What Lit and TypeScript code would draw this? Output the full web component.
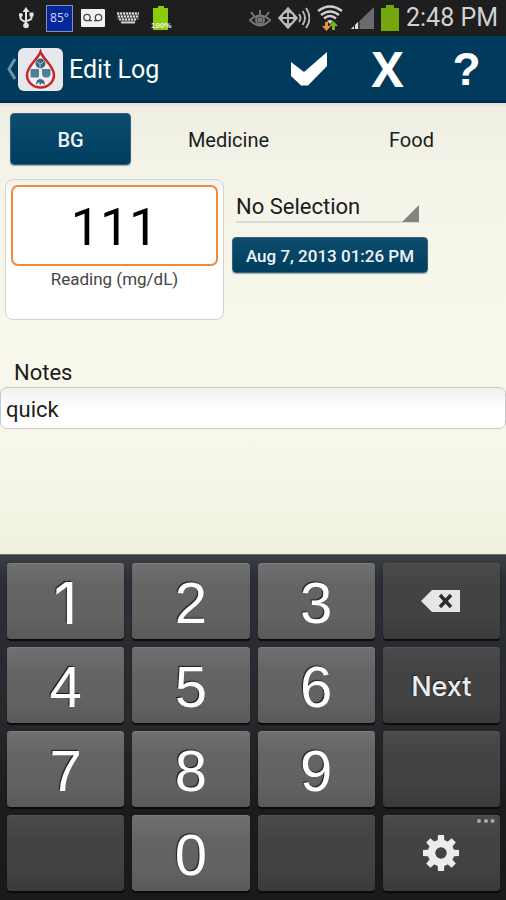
import { LitElement, html, css, svg } from "lit";
import { customElement } from "lit/decorators.js";
import { classMap } from "lit/directives/class-map.js";

@customElement("status-bar")
class StatusBar extends LitElement {
  static styles = css`
    :host {
      display: flex;
      align-items: center;
      justify-content: space-between;
      height: 36px;
      padding: 0 8px 0 18px;
      background: #1e1e1e;
      color: #d2d2d2;
      font-family: Roboto, sans-serif;
    }
    .group { display: flex; align-items: center; gap: 8px; }
    .group.right { gap: 7px; }
    svg { display: block; }
    .temp {
      box-sizing: border-box;
      width: 27px;
      height: 27px;
      border: 1px solid #7f8fc0;
      background: #06279a;
      color: #d3dcf8;
      font: 12px/24px "Open Sans", sans-serif;
      text-align: center;
    }
    .charge { display: grid; justify-items: center; width: 20px; }
    .charge > * { grid-area: 1 / 1; }
    .charge span {
      align-self: end;
      color: #f2f8e4;
      font: bold 8px/9px "Liberation Sans", sans-serif;
    }
    time { font-size: 25px; line-height: 36px; white-space: nowrap; }
  `;

  render() {
    return html`
      <div class="group">
        <svg width="20" height="22" viewBox="0 0 20 22" fill="none" stroke="#e4e4e4" stroke-width="2">
          <path d="M8 3v16M2.500 8v3q0 2 5.500 4M13.500 8v3q0 2-5.500 3" />
          <path d="M8 0l3.500 5h-7z" fill="#e4e4e4" stroke="none" />
          <circle cx="8" cy="18.500" r="2.800" fill="#e4e4e4" stroke="none" />
          <circle cx="2.800" cy="8" r="2" fill="#e4e4e4" stroke="none" />
          <path d="M11.500 5.500h4v4h-4z" fill="#e4e4e4" stroke="none" />
        </svg>
        <span class="temp">85°</span>
        <svg width="24" height="18" viewBox="0 0 24 18">
          <rect width="24" height="18" rx="1" fill="#f2f2f2" />
          <g fill="none" stroke="#4a4a4a" stroke-width="1.3">
            <circle cx="6" cy="8.500" r="3.200" /><circle cx="17.500" cy="8.500" r="3.200" />
            <path d="M6 11.700h5M13 11.700h5" />
          </g>
        </svg>
        <svg width="30" height="14" viewBox="0 0 30 14">
          <path d="M4 1h22v8h-3l-1 3H8l-1-3H4z" fill="#4c4c4c" />
          <path d="M4 2.500h22M5 5.500h20M6 8.500h18" stroke="#ddd" stroke-width="2" stroke-dasharray="2 1" />
          <path d="M8 11.500h14" stroke="#ccc" stroke-width="2" />
        </svg>
        <span class="charge">
          <svg width="20" height="24" viewBox="0 0 20 24" fill="#8ccc0c">
            <path d="M7 0h6v2h4v22H2V2h5z" />
          </svg>
          <span>100%</span>
        </span>
      </div>
      <div class="group right">
        <svg width="22" height="20" viewBox="0 0 22 20" fill="none" stroke="#777" stroke-width="2">
          <path d="M1 12q10-9 20 0q-10 11-20 0zM11 7V2M5 8L2 4M17 8l3-4" />
          <circle cx="11" cy="12" r="4" /><circle cx="11" cy="12" r="1.500" fill="#777" />
        </svg>
        <svg width="32" height="22" viewBox="0 0 32 22" fill="none" stroke="#bdbdbd" stroke-width="1.800">
          <path d="M10 1l9 10-9 10L1 11z" stroke-linejoin="round" />
          <circle cx="10" cy="11" r="6.500" />
          <path d="M10 2v18M2 11h16M21 7q3 4 0 8M24.500 4q5 7 0 14M28 1q7 10 0 20" />
        </svg>
        <svg width="26" height="26" viewBox="0 0 26 26" fill="none" stroke="#cfcfcf" stroke-width="2.400">
          <path d="M1 6q12-9 24 0M4 10q9-7 18 0M7 13.500q6-5 12 0" />
          <path d="M10 16q3-2 6 0l-3 3z" fill="#cfcfcf" stroke="none" />
          <path d="M8 17h3v4h3l-4.500 5L5 21h3z" fill="#e8923a" stroke="none" />
          <path d="M15 25h3v-4h3l-4.500-5L12 21h3z" fill="#74b816" stroke="none" />
        </svg>
        <svg width="24" height="24" viewBox="0 0 24 24">
          <path d="M24 1v22H1z" fill="#6b6b6b" />
          <path d="M8 16v7H1z" fill="#e0e0e0" />
          <path d="M4.500 17v6M9 13v10" stroke="#1e1e1e" />
        </svg>
        <svg width="18" height="26" viewBox="0 0 18 26" fill="#72a80e">
          <path d="M5 0h8v3h5v23H0V3h5z" />
        </svg>
        <time>2:48 PM</time>
      </div>
    `;
  }
}

@customElement("log-header")
class LogHeader extends LitElement {
  static styles = css`
    :host {
      display: flex;
      align-items: center;
      height: 64px;
      border-bottom: 3px solid #002c50;
      background: #003a5d;
      color: #fff;
      font-family: Roboto, sans-serif;
    }
    button {
      display: flex;
      align-items: center;
      justify-content: center;
      height: 64px;
      padding: 0;
      border: 0;
      background: none;
      color: inherit;
    }
    .back { gap: 2px; padding: 2px 0 0 6px; }
    h1 { flex: 1; margin: 0 0 0 6px; padding-top: 4px; font-size: 25px; font-weight: 400; line-height: 32px; }
    .action { width: 79px; padding-top: 2px; }
    .cross { font: bold 48px/64px "Open Sans", sans-serif; }
    .help { font: bold 46px/64px "Liberation Sans", sans-serif; }
    svg { display: block; }
  `;

  render() {
    return html`
      <button class="back" aria-label="Back">
        <svg width="10" height="22" viewBox="0 0 10 22" fill="none" stroke="#6f93a8" stroke-width="3">
          <path d="M9 1L3 11l6 10" />
        </svg>
        <svg width="45" height="43" viewBox="0 0 45 43">
          <rect width="45" height="43" rx="6" fill="#e6e8eb" />
          <path d="M22.500 4C20 11 9 18 9 27a13.500 12.500 0 0 0 27 0C36 18 25 11 22.500 4z" fill="#f0eeee" stroke="#c9252b" stroke-width="2.500" />
          <circle cx="22.500" cy="15.500" r="5" fill="#3f6a80" />
          <path d="M19 14l4 2 3-3M22 16v4" stroke="#a9c0cc" fill="none" />
          <rect x="12.500" y="21" width="8.500" height="8.500" rx="1" fill="#4b8298" />
          <path d="M24 21h8.500v6l-2 2.500H26L24 27z" fill="#4b8298" />
          <path d="M18 37q0-6 4-6 5 0 5 6l-3-2-2 2-1-3z" fill="#3f6a80" />
        </svg>
      </button>
      <h1>Edit Log</h1>
      <button class="action" aria-label="Save">
        <svg width="38" height="36" viewBox="0 0 38 36" fill="#fff">
          <path d="M1 11l13 10L37 1v14L18 34.500h-7L1 25z" />
        </svg>
      </button>
      <button class="action cross" aria-label="Cancel">X</button>
      <button class="action help" aria-label="Help">?</button>
    `;
  }
}

@customElement("log-form")
class LogForm extends LitElement {
  static styles = css`
    :host {
      display: block;
      background: linear-gradient(#dededa 0, #eeeee2 5px, #f3f3e8 60px, #f7f7ec 200px, #f7f8ea 340px, #eff1e0 100%);
      color: #1c1c1c;
      font-family: Roboto, sans-serif;
    }
    button, input, select {
      box-sizing: border-box;
      margin: 0;
      font-family: inherit;
      color: inherit;
      outline: none;
    }
    .tabs {
      display: grid;
      grid-template-columns: 140fr 176fr 190fr;
      padding: 10px 0 14px;
    }
    .tab {
      height: 52px;
      margin: 0 9px 0 10px;
      padding: 2px 0 0;
      border: 0;
      background: none;
      font-size: 20px;
    }
    .tab.active, .date {
      border: 1px solid #35607c;
      border-radius: 4px;
      background: linear-gradient(#0c4d6e, #003d5e);
      color: #eef3fa;
      font-weight: 500;
      box-shadow: 0 1px 1px #9aa8ae;
    }
    .entry {
      display: grid;
      grid-template-columns: 219fr 274fr;
      gap: 8px;
      padding: 0 0 0 5px;
    }
    .card {
      box-sizing: border-box;
      height: 141px;
      padding: 5px;
      border: 1px solid #d2d3ce;
      border-radius: 8px;
      background: linear-gradient(#f0f0ee, #fff 16px);
      text-align: center;
    }
    .reading {
      display: block;
      width: 100%;
      height: 81px;
      padding: 4px 0 0;
      border: 2px solid #f5883c;
      border-radius: 7px;
      background: #fff;
      color: #000;
      font-size: 52px;
      text-align: center;
    }
    .card label { display: block; font-size: 17px; line-height: 26px; color: #444; }
    .side { display: flex; flex-direction: column; align-items: flex-start; gap: 14px; padding-top: 11px; }
    .picker { display: grid; width: 183px; margin-left: 4px; }
    .picker > * { grid-area: 1 / 1; }
    .picker select {
      appearance: none;
      width: 100%;
      height: 33px;
      padding: 2px 20px 0 0;
      border: 0;
      border-bottom: 2px solid #d9dad1;
      border-radius: 0;
      background: none;
      font-size: 22px;
    }
    .corner { place-self: end; pointer-events: none; }
    .date { width: 196px; height: 36px; padding: 2px 0 0; font-size: 17px; }
    .notes { padding-top: 39px; }
    .notes label { display: block; padding-left: 14px; font-size: 22px; line-height: 28px; }
    .notes input {
      display: block;
      width: 100%;
      height: 42px;
      padding: 2px 5px 0;
      border: 1px solid #c9cac8;
      border-radius: 7px;
      background: linear-gradient(#efefef, #fff 20px);
      font-size: 22px;
    }
  `;

  static properties = { tab: { state: true } };
  declare tab: string;
  constructor() {
    super();
    this.tab = "BG";
  }

  render() {
    return html`
      <nav class="tabs">
        ${["BG", "Medicine", "Food"].map(
          (name) => html`<button
            class=${classMap({ tab: true, active: name === this.tab })}
            @click=${() => (this.tab = name)}
          >${name}</button>`
        )}
      </nav>
      <div class="entry">
        <div class="card">
          <input class="reading" id="reading" inputmode="numeric" value="111" />
          <label for="reading">Reading (mg/dL)</label>
        </div>
        <div class="side">
          <div class="picker">
            <select aria-label="Meal"><option>No Selection</option></select>
            <svg class="corner" width="17" height="18" viewBox="0 0 17 18"><path d="M17 0v17H0z" fill="#85857f" /></svg>
          </div>
          <button class="date">Aug 7, 2013 01:26 PM</button>
        </div>
      </div>
      <div class="notes">
        <label for="notes">Notes</label>
        <input id="notes" value="quick" />
      </div>
    `;
  }
}

const teeth = [0, 45, 90, 135, 180, 225, 270, 315];

const gearIcon = html`<svg width="36" height="36" viewBox="-18 -18 36 36" fill="#ececec">
  ${teeth.map((a) => svg`<path d="M-3.500 -10L-3 -18H3L3.500 -10z" transform="rotate(${a})" />`)}
  <circle r="9.500" fill="none" stroke="#ececec" stroke-width="7.500" />
</svg>`;

const deleteIcon = html`<svg width="40" height="24" viewBox="0 0 40 24">
  <path d="M0 12L11 1h28v22H11z" fill="#e6e6e6" />
  <path d="M19 6l11 12M30 6L19 18" stroke="#2c2c2c" stroke-width="3.500" />
</svg>`;

@customElement("number-pad")
class NumberPad extends LitElement {
  static styles = css`
    :host {
      display: grid;
      grid-template-columns: repeat(4, 1fr);
      grid-auto-rows: 76px;
      gap: 8px;
      padding: 8px 6px 9px 7px;
      border-top: 1px solid #6b6f70;
      background: linear-gradient(#3a3f45 0, #2b2e35 24px, #27292d 160px, #1b1c1e 250px, #1a1a1b 100%);
    }
    button {
      display: flex;
      align-items: center;
      justify-content: center;
      position: relative;
      padding: 4px 0 0;
      border: 0;
      border-radius: 4px;
      background: linear-gradient(#707070, #646464 24px, #626262 54px, #595959);
      box-shadow: 0 2px 1px #0b0b0c, inset 0 1px 0 #7c7c7c;
      color: #fff;
      font: 58px/72px "Liberation Sans", Arial, sans-serif;
      text-shadow: -1px -1px 1px #1c1c1c;
    }
    .dark {
      padding: 0;
      background: linear-gradient(#4b4b4b, #434343 24px, #424242 54px, #3a3a3a);
      box-shadow: 0 2px 1px #0b0b0c, inset 0 1px 0 #525252;
    }
    .one { font-family: Inter, sans-serif; }
    .word { padding-top: 4px; color: #ececec; font: bold 27px/72px Inter, sans-serif; font-weight: 500; }
    .dots { position: absolute; top: 4px; right: 5px; }
  `;

  render() {
    const digit = (d: string) => html`<button class=${classMap({ one: d === "1" })}>${d}</button>`;
    const blank = html`<button class="dark" aria-label="Unused key"></button>`;
    return html`
      ${["1", "2", "3"].map(digit)}
      <button class="dark" aria-label="Delete">${deleteIcon}</button>
      ${["4", "5", "6"].map(digit)}
      <button class="dark word">Next</button>
      ${["7", "8", "9"].map(digit)}
      ${blank} ${blank} ${digit("0")} ${blank}
      <button class="dark" aria-label="Settings">
        ${gearIcon}
        <svg class="dots" width="18" height="4" viewBox="0 0 18 4" fill="#a8a8a8">
          <circle cx="2" cy="2" r="2" /><circle cx="9" cy="2" r="2" /><circle cx="15.500" cy="2" r="2" />
        </svg>
      </button>
    `;
  }
}

@customElement("app-root")
class AppRoot extends LitElement {
  static styles = css`
    :host { display: flex; flex-direction: column; min-height: 100vh; }
    log-form { flex: 1; }
  `;

  render() {
    return html`
      <status-bar></status-bar>
      <log-header></log-header>
      <log-form></log-form>
      <number-pad></number-pad>
    `;
  }
}
